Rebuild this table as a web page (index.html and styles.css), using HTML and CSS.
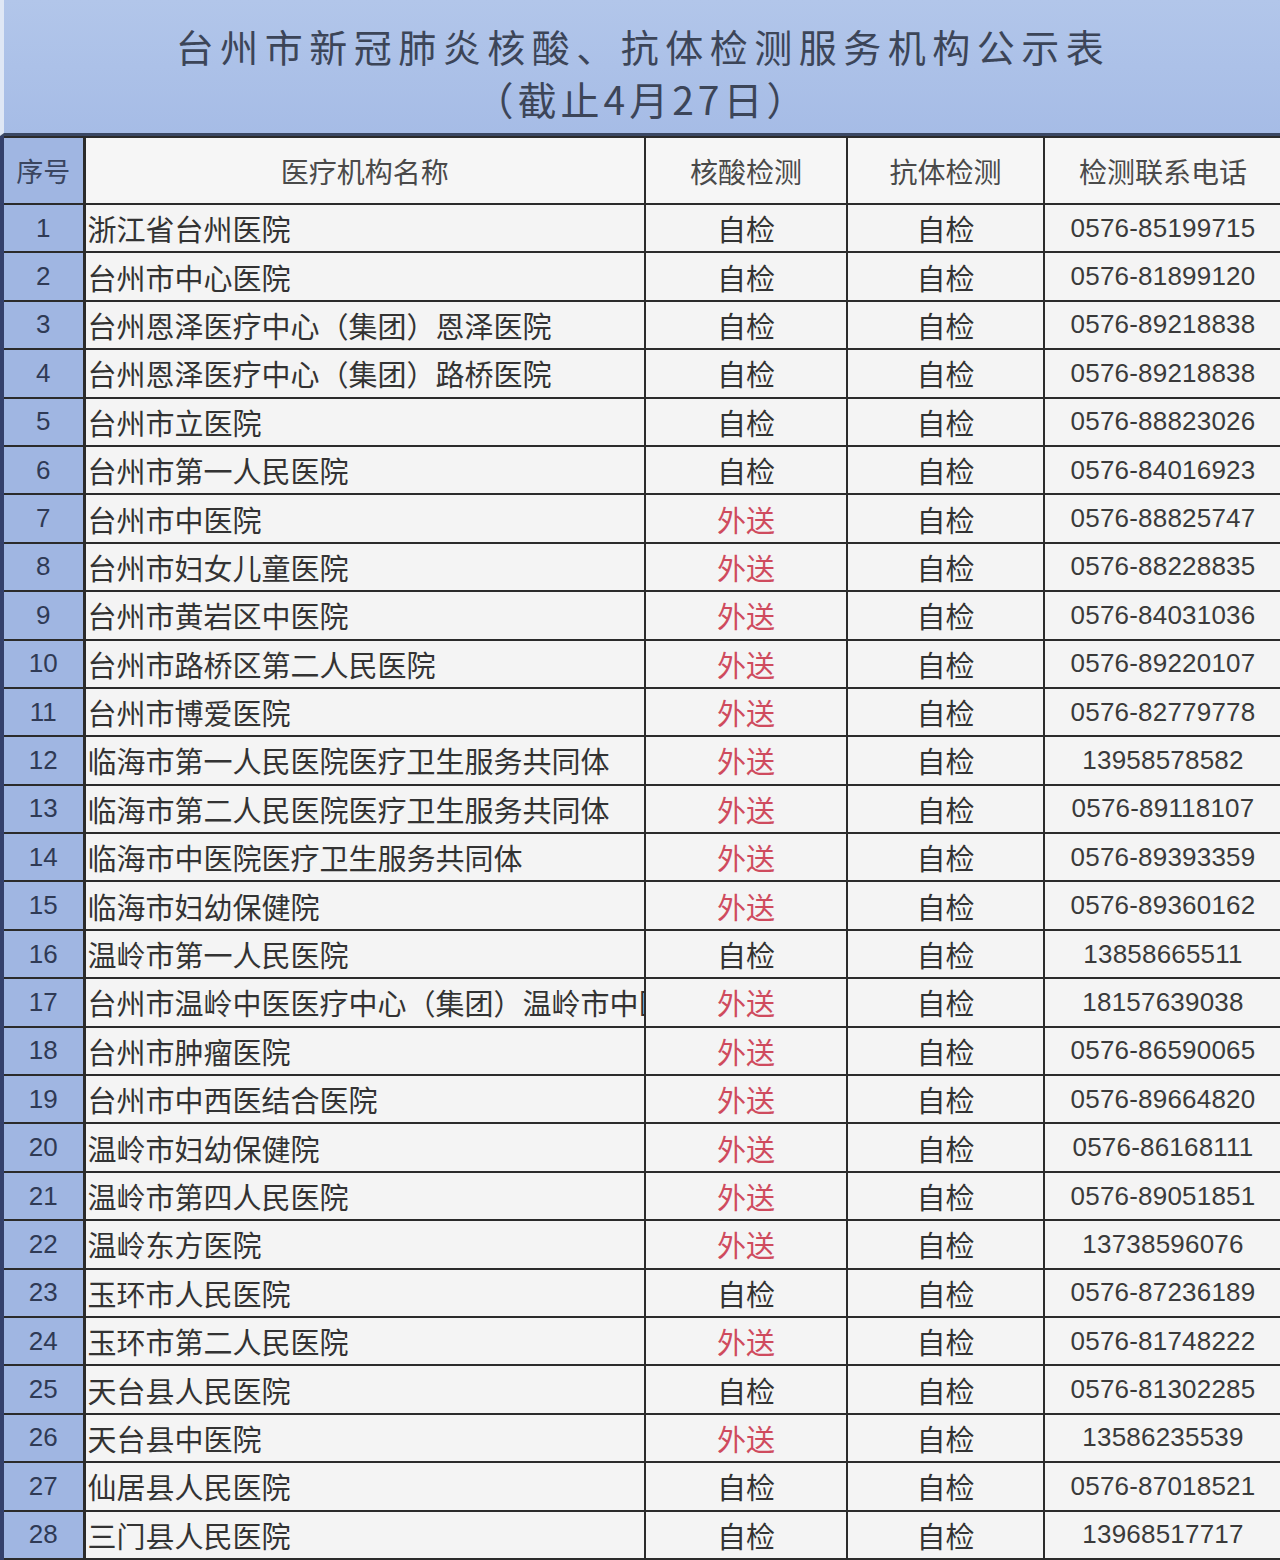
FILE: index.html
```html
<!DOCTYPE html>
<html lang="zh-CN">
<head>
<meta charset="utf-8">
<title>台州市新冠肺炎核酸、抗体检测服务机构公示表</title>
<link rel="stylesheet" href="styles.css">
</head>
<body>
<div class="sheet">
  <div class="title">
    <div class="t1">台州市新冠肺炎核酸、抗体检测服务机构公示表</div>
    <div class="t2">（截止4月27日）</div>
  </div>
  <table class="grid">
    <colgroup>
      <col class="c-seq"><col class="c-name"><col class="c-na"><col class="c-ab"><col class="c-tel">
    </colgroup>
    <thead>
      <tr><th class="seq">序号</th><th>医疗机构名称</th><th>核酸检测</th><th>抗体检测</th><th>检测联系电话</th></tr>
    </thead>
    <tbody>
      <tr><td class="seq">1</td><td class="name">浙江省台州医院</td><td>自检</td><td>自检</td><td class="tel">0576-85199715</td></tr>
      <tr><td class="seq">2</td><td class="name">台州市中心医院</td><td>自检</td><td>自检</td><td class="tel">0576-81899120</td></tr>
      <tr><td class="seq">3</td><td class="name">台州恩泽医疗中心（集团）恩泽医院</td><td>自检</td><td>自检</td><td class="tel">0576-89218838</td></tr>
      <tr><td class="seq">4</td><td class="name">台州恩泽医疗中心（集团）路桥医院</td><td>自检</td><td>自检</td><td class="tel">0576-89218838</td></tr>
      <tr><td class="seq">5</td><td class="name">台州市立医院</td><td>自检</td><td>自检</td><td class="tel">0576-88823026</td></tr>
      <tr><td class="seq">6</td><td class="name">台州市第一人民医院</td><td>自检</td><td>自检</td><td class="tel">0576-84016923</td></tr>
      <tr><td class="seq">7</td><td class="name">台州市中医院</td><td class="out">外送</td><td>自检</td><td class="tel">0576-88825747</td></tr>
      <tr><td class="seq">8</td><td class="name">台州市妇女儿童医院</td><td class="out">外送</td><td>自检</td><td class="tel">0576-88228835</td></tr>
      <tr><td class="seq">9</td><td class="name">台州市黄岩区中医院</td><td class="out">外送</td><td>自检</td><td class="tel">0576-84031036</td></tr>
      <tr><td class="seq">10</td><td class="name">台州市路桥区第二人民医院</td><td class="out">外送</td><td>自检</td><td class="tel">0576-89220107</td></tr>
      <tr><td class="seq">11</td><td class="name">台州市博爱医院</td><td class="out">外送</td><td>自检</td><td class="tel">0576-82779778</td></tr>
      <tr><td class="seq">12</td><td class="name">临海市第一人民医院医疗卫生服务共同体</td><td class="out">外送</td><td>自检</td><td class="tel">13958578582</td></tr>
      <tr><td class="seq">13</td><td class="name">临海市第二人民医院医疗卫生服务共同体</td><td class="out">外送</td><td>自检</td><td class="tel">0576-89118107</td></tr>
      <tr><td class="seq">14</td><td class="name">临海市中医院医疗卫生服务共同体</td><td class="out">外送</td><td>自检</td><td class="tel">0576-89393359</td></tr>
      <tr><td class="seq">15</td><td class="name">临海市妇幼保健院</td><td class="out">外送</td><td>自检</td><td class="tel">0576-89360162</td></tr>
      <tr><td class="seq">16</td><td class="name">温岭市第一人民医院</td><td>自检</td><td>自检</td><td class="tel">13858665511</td></tr>
      <tr><td class="seq">17</td><td class="name">台州市温岭中医医疗中心（集团）温岭市中医院</td><td class="out">外送</td><td>自检</td><td class="tel">18157639038</td></tr>
      <tr><td class="seq">18</td><td class="name">台州市肿瘤医院</td><td class="out">外送</td><td>自检</td><td class="tel">0576-86590065</td></tr>
      <tr><td class="seq">19</td><td class="name">台州市中西医结合医院</td><td class="out">外送</td><td>自检</td><td class="tel">0576-89664820</td></tr>
      <tr><td class="seq">20</td><td class="name">温岭市妇幼保健院</td><td class="out">外送</td><td>自检</td><td class="tel">0576-86168111</td></tr>
      <tr><td class="seq">21</td><td class="name">温岭市第四人民医院</td><td class="out">外送</td><td>自检</td><td class="tel">0576-89051851</td></tr>
      <tr><td class="seq">22</td><td class="name">温岭东方医院</td><td class="out">外送</td><td>自检</td><td class="tel">13738596076</td></tr>
      <tr><td class="seq">23</td><td class="name">玉环市人民医院</td><td>自检</td><td>自检</td><td class="tel">0576-87236189</td></tr>
      <tr><td class="seq">24</td><td class="name">玉环市第二人民医院</td><td class="out">外送</td><td>自检</td><td class="tel">0576-81748222</td></tr>
      <tr><td class="seq">25</td><td class="name">天台县人民医院</td><td>自检</td><td>自检</td><td class="tel">0576-81302285</td></tr>
      <tr><td class="seq">26</td><td class="name">天台县中医院</td><td class="out">外送</td><td>自检</td><td class="tel">13586235539</td></tr>
      <tr><td class="seq">27</td><td class="name">仙居县人民医院</td><td>自检</td><td>自检</td><td class="tel">0576-87018521</td></tr>
      <tr><td class="seq">28</td><td class="name">三门县人民医院</td><td>自检</td><td>自检</td><td class="tel">13968517717</td></tr>
    </tbody>
  </table>
</div>
</body>
</html>
```

FILE: styles.css
```css
html, body {
  margin: 0;
  padding: 0;
  background: #f3f3f3;
}
.sheet {
  width: 1280px;
  font-family: "Noto Sans CJK SC", "Noto Sans", sans-serif;
  color: #333;
}
.title {
  height: 136px;
  box-sizing: border-box;
  background: linear-gradient(#b2c6ea, #a6bce6);
  border-left: 4px solid #dfe7f5;
  border-bottom: 3px solid #3a4763;
  text-align: center;
  color: #3c4558;
  padding-top: 19px;
}
.t1 {
  font-size: 38px;
  line-height: 54px;
  letter-spacing: 6.5px;
  padding-left: 2px;
}
.t2 {
  font-size: 39px;
  line-height: 50px;
  letter-spacing: 4px;
}
.grid {
  width: 1280px;
  border-collapse: collapse;
  table-layout: fixed;
}
.c-seq { width: 82px; }
.c-name { width: 561px; }
.c-na { width: 202px; }
.c-ab { width: 197px; }
.c-tel { width: 238px; }
.grid th, .grid td {
  border: 2px solid #2b2b2b;
  background: #f4f4f4;
  text-align: center;
  white-space: nowrap;
  overflow: hidden;
  padding: 0;
  font-size: 29px;
  font-weight: 400;
  color: #333;
}
.grid thead tr { height: 67px; }
.grid th { color: #4a4a4a; background: #f6f6f6; font-size: 28px; }
.grid tbody tr { height: 48.4px; }
.grid .seq {
  background: #a0b6e2;
  border-left: 4px solid #34406a;
  border-right: 3px solid #2b2b2b;
  color: #2f3a55;
  font-family: "Liberation Sans", sans-serif;
  font-size: 26px;
}
.grid th.seq {
  font-family: "Noto Sans CJK SC", sans-serif;
  font-size: 27px;
  color: #3a4560;
}
.grid .name {
  text-align: left;
  padding-left: 2px;
  text-overflow: clip;
}
.grid .out {
  color: #cf4b5e;
}
.grid .tel {
  font-family: "Liberation Sans", sans-serif;
  font-size: 26px;
  letter-spacing: 0.2px;
  color: #3a3a3a;
}
```
